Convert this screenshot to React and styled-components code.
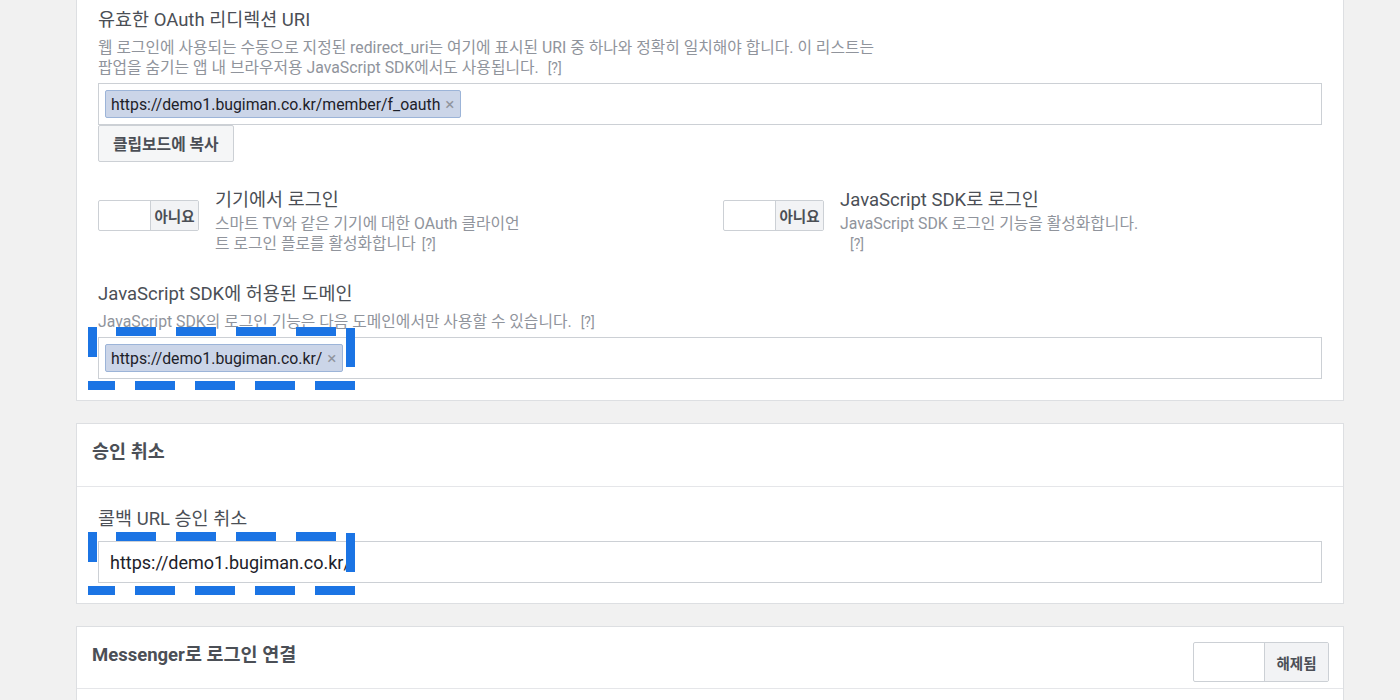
import React from 'react';
import styled, { createGlobalStyle } from 'styled-components';

const GlobalStyle = createGlobalStyle`
  html, body {
    margin: 0;
    padding: 0;
    background: #f1f1f1;
  }
  body {
    font-family: Roboto, "Noto Sans CJK KR", sans-serif;
    color: #1d2129;
  }
`;

const Page = styled.div`
  width: 1268px;
  margin-left: 76px;
  display: flex;
  flex-direction: column;
  gap: 22px;
`;

const Card = styled.section`
  background: #fff;
  border: 1px solid #dddfe2;
  border-top: ${p => (p.$cut ? 'none' : '1px solid #dddfe2')};
`;

const CardHead = styled.div`
  height: ${p => p.$h || '61px'};
  padding: 0 14px 0 15px;
  display: flex;
  align-items: flex-start;
  justify-content: space-between;
  border-bottom: 1px solid #e5e6e9;
`;

const HeadTitle = styled.h3`
  margin: ${p => p.$mt || '16px'} 0 0;
  font-size: 18.5px;
  line-height: 24px;
  font-weight: 700;
  color: #4b4f56;
`;

const CardBody = styled.div`
  padding: ${p => p.$pt || '22px'} 21px ${p => p.$pb || '21px'};
  display: flex;
  flex-direction: column;
`;

const FieldTitle = styled.div`
  font-size: 18.5px;
  line-height: 20px;
  color: #4b4f56;
`;

const Desc = styled.div`
  margin-top: ${p => p.$mt || '8px'};
  font-size: 15.8px;
  line-height: 20px;
  color: #90949c;
  max-width: ${p => p.$max || 'none'};
`;

const Help = styled.span`
  display: inline-block;
  margin-left: ${p => p.$ml || '4px'};
  font-size: 14px;
  line-height: 20px;
  color: #90949c;
`;

const Field = styled.div`
  position: relative;
  margin-top: ${p => p.$mt || '5px'};
`;

const TagBox = styled.div`
  border: 1px solid #ccd0d5;
  padding: 6px;
  display: flex;
  gap: 4px;
  background: #fff;
`;

const Tag = styled.span`
  height: 26px;
  display: inline-flex;
  align-items: center;
  padding: 0 6px 0 5px;
  background: #cbd5e8;
  border: 1px solid #9cb4d8;
  border-radius: 2px;
  font-size: 15.8px;
  color: #1d2129;
`;

const TagX = styled.span`
  margin-left: 5px;
  font-size: 17px;
  color: #90949c;
`;

const TextInput = styled.div`
  height: 40px;
  border: 1px solid #ccd0d5;
  padding: 0 11px;
  display: flex;
  align-items: center;
  font-size: 18px;
  color: #1d2129;
`;

const Button = styled.button`
  align-self: flex-start;
  height: 37px;
  padding: 0 14px;
  background: #f5f6f7;
  border: 1px solid #ccd0d5;
  border-radius: 2px;
  font-family: inherit;
  font-size: 15.8px;
  font-weight: 700;
  color: #4b4f56;
`;

const ToggleGrid = styled.div`
  margin-top: 28px;
  display: grid;
  grid-template-columns: 625px 1fr;
`;

const ToggleItem = styled.div`
  display: flex;
  gap: 16px;
`;

const Toggle = styled.div`
  margin-top: ${p => (p.$big ? '15px' : '10px')};
  flex: none;
  display: flex;
  height: ${p => (p.$big ? '38px' : '29px')};
  border: 1px solid #ccd0d5;
  border-radius: 2px;
  overflow: hidden;
  background: #fff;
`;

const ToggleBlank = styled.div`
  width: ${p => (p.$big ? '70px' : '51px')};
`;

const ToggleLabel = styled.div`
  width: ${p => (p.$big ? '63px' : '47px')};
  border-left: 1px solid #ccd0d5;
  background: #f2f3f5;
  display: flex;
  align-items: center;
  justify-content: center;
  font-size: 14.5px;
  font-weight: 700;
  color: #4b4f56;
`;

const ToggleText = styled.div`
  display: flex;
  flex-direction: column;
`;

const Section = styled.div`
  margin-top: 30px;
`;

const Dashed = styled.svg`
  position: absolute;
  left: -10px;
  top: ${p => p.$top || '-10px'};
  pointer-events: none;
`;

// blue dashed highlight drawn over the first 260px of an input
function DashBox({ top }) {
  return (
    <Dashed $top={top} width="267" height="64" viewBox="0 0 267 64">
      <g fill="none" stroke="#1b74e4" strokeWidth="9">
        <line x1="28" y1="4.5" x2="248" y2="4.5" strokeDasharray="40 20" />
        <line x1="262.5" y1="1" x2="262.5" y2="40" />
        <line x1="-13" y1="58.5" x2="267" y2="58.5" strokeDasharray="40 20" />
        <line x1="4.5" y1="0" x2="4.5" y2="30" />
      </g>
    </Dashed>
  );
}

function Switch({ label, big }) {
  return (
    <Toggle $big={big}>
      <ToggleBlank $big={big} />
      <ToggleLabel $big={big}>{label}</ToggleLabel>
    </Toggle>
  );
}

export default function App() {
  return (
    <>
      <GlobalStyle />
      <Page>
        <Card $cut>
          <CardBody $pt="10px" $pb="21px">
            <FieldTitle>유효한 OAuth 리디렉션 URI</FieldTitle>
            <Desc $mt="8px">
              웹 로그인에 사용되는 수동으로 지정된 redirect_uri는 여기에 표시된 URI 중 하나와 정확히 일치해야 합니다. 이 리스트는
              <br />
              팝업을 숨기는 앱 내 브라우저용 JavaScript SDK에서도 사용됩니다.
              <Help $ml="9px">[?]</Help>
            </Desc>
            <Field>
              <TagBox>
                <Tag>
                  https://demo1.bugiman.co.kr/member/f_oauth<TagX>×</TagX>
                </Tag>
              </TagBox>
            </Field>
            <Button>클립보드에 복사</Button>

            <ToggleGrid>
              <ToggleItem>
                <Switch label="아니요" />
                <ToggleText>
                  <FieldTitle>기기에서 로그인</FieldTitle>
                  <Desc $mt="4px" $max="314px">
                    스마트 TV와 같은 기기에 대한 OAuth 클라이언트 로그인 플로를 활성화합니다
                    <Help $ml="6px">[?]</Help>
                  </Desc>
                </ToggleText>
              </ToggleItem>
              <ToggleItem>
                <Switch label="아니요" />
                <ToggleText>
                  <FieldTitle>JavaScript SDK로 로그인</FieldTitle>
                  <Desc $mt="4px" $max="314px">
                    JavaScript SDK 로그인 기능을 활성화합니다.
                    <br />
                    <Help $ml="10px">[?]</Help>
                  </Desc>
                </ToggleText>
              </ToggleItem>
            </ToggleGrid>

            <Section>
              <FieldTitle>JavaScript SDK에 허용된 도메인</FieldTitle>
              <Desc $mt="8px">
                JavaScript SDK의 로그인 기능은 다음 도메인에서만 사용할 수 있습니다.
                <Help $ml="9px">[?]</Help>
              </Desc>
              <Field>
                <TagBox>
                  <Tag>
                    https://demo1.bugiman.co.kr/<TagX>×</TagX>
                  </Tag>
                </TagBox>
                <DashBox top="-10px" />
              </Field>
            </Section>
          </CardBody>
        </Card>

        <Card>
          <CardHead $h="62px">
            <HeadTitle $mt="16px">승인 취소</HeadTitle>
          </CardHead>
          <CardBody $pt="22px" $pb="20px">
            <FieldTitle>콜백 URL 승인 취소</FieldTitle>
            <Field $mt="12px">
              <TextInput>https://demo1.bugiman.co.kr/</TextInput>
              <DashBox top="-9px" />
            </Field>
          </CardBody>
        </Card>

        <Card>
          <CardHead $h="61px">
            <HeadTitle $mt="16px">Messenger로 로그인 연결</HeadTitle>
            <Switch label="해제됨" big />
          </CardHead>
          <CardBody $pt="40px" />
        </Card>
      </Page>
    </>
  );
}
